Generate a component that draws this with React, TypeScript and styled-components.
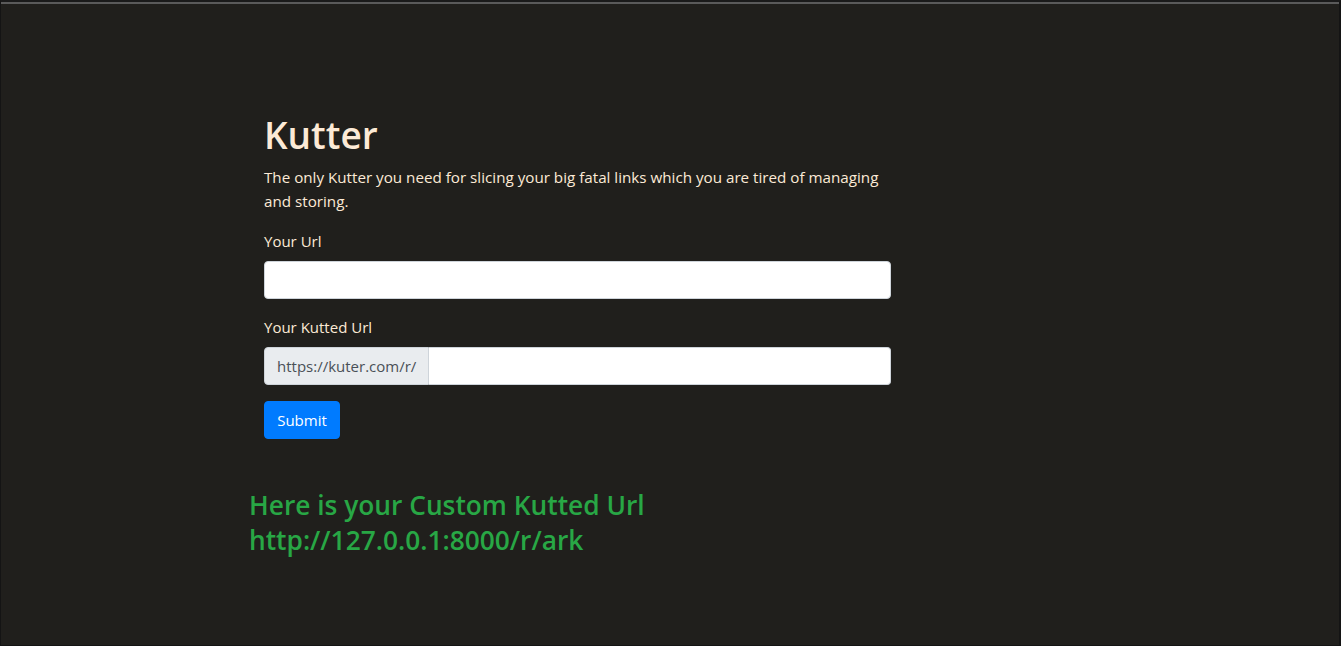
import React from "react";
import styled, { createGlobalStyle } from "styled-components";

const Global = createGlobalStyle`
  html, body { margin: 0; padding: 0; background: #1f1e1b; }
  body { font-family: "Open Sans", "Noto Sans", sans-serif; }
  * { box-sizing: border-box; }
`;

const Frame = styled.div`
  width: 1341px;
  height: 646px;
  background: #201f1c;
  border-top: 2px solid #1a1a1a;
  border-left: 1px solid #141414;
  border-right: 2px solid #141414;
  border-bottom: 1px solid #141414;
  overflow: hidden;
`;

const TopLine = styled.div`
  height: 2px;
  background: #5a5a5a;
`;

const Main = styled.main`
  padding: 109px 0 0 248px;
  display: flex;
  flex-direction: column;
`;

const FormBox = styled.form`
  width: 627px;
  margin-left: 15px;
  display: flex;
  flex-direction: column;
`;

const Title = styled.h1`
  margin: 0 0 8px;
  font-size: 37px;
  font-weight: 600;
  line-height: 1.2;
  color: #fcead6;
`;

const Lead = styled.p`
  margin: 0 0 16px;
  font-size: 15.2px;
  line-height: 24px;
  color: #fcead6;
`;

const Group = styled.div`
  display: flex;
  flex-direction: column;
  margin-bottom: 16px;
`;

const Label = styled.label`
  font-size: 15px;
  line-height: 24px;
  color: #fcead6;
  margin-bottom: 8px;
`;

const Input = styled.input`
  height: 38px;
  width: 100%;
  border: 1px solid #ced4da;
  border-radius: 4px;
  background: #fff;
  padding: 6px 12px;
  font-size: 16px;
  font-family: inherit;
`;

const InputRow = styled.div`
  display: flex;
  height: 38px;
`;

const Prepend = styled.span`
  display: flex;
  align-items: center;
  padding: 0 12px;
  width: 165px;
  background: #e9ecef;
  color: #495057;
  font-size: 15px;
  border: 1px solid #ced4da;
  border-radius: 4px 0 0 4px;
  white-space: nowrap;
`;

const JoinedInput = styled(Input)`
  flex: 1;
  border-left: none;
  border-radius: 0 4px 4px 0;
`;

const Button = styled.button`
  align-self: flex-start;
  height: 38px;
  width: 76px;
  margin-top: 0;
  background: #007bff;
  border: 1px solid #007bff;
  border-radius: 4px;
  color: #fff;
  font-family: inherit;
  font-size: 15px;
`;

const Result = styled.h3`
  margin: 49px 0 0;
  font-size: 26.3px;
  font-weight: 600;
  line-height: 35px;
  color: #28a745;
`;

export default function App() {
  return (
    <>
      <Global />
      <Frame>
        <TopLine />
        <Main>
          <FormBox onSubmit={(e) => e.preventDefault()}>
            <Title>Kutter</Title>
            <Lead>
              The only Kutter you need for slicing your big fatal links which you are tired of managing and storing.
            </Lead>
            <Group>
              <Label>Your Url</Label>
              <Input type="text" />
            </Group>
            <Group>
              <Label>Your Kutted Url</Label>
              <InputRow>
                <Prepend>https://kuter.com/r/</Prepend>
                <JoinedInput type="text" />
              </InputRow>
            </Group>
            <Button type="submit">Submit</Button>
          </FormBox>
          <Result>
            Here is your Custom Kutted Url
            <br />
            http://127.0.0.1:8000/r/ark
          </Result>
        </Main>
      </Frame>
    </>
  );
}
